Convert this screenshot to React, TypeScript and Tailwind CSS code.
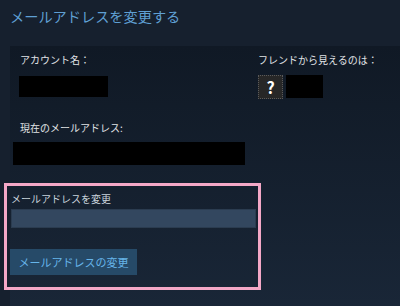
export default function App() {
  const font = { fontFamily: '"Noto Sans CJK JP", "Noto Sans", sans-serif' };
  return (
    <div
      className="w-[400px] h-[306px] overflow-hidden bg-[#16202e] flex flex-col"
      style={font}
    >
      <div className="pt-[6px] pl-[10px] text-[14.2px] leading-[20px] text-[#5f9fd3]">
        メールアドレスを変更する
      </div>
      <div className="mt-[20px] ml-[10px] flex-1 bg-gradient-to-b from-[#101925] to-[#192637] flex flex-col pt-[7px]">
        <div className="flex">
          <div className="w-[248px] pl-[10px] flex flex-col">
            <div className="text-[10px] leading-[14px] text-[#e1e4e6]">アカウント名：</div>
            <div className="mt-[9px] -ml-[1px] w-[89px] h-[21px] bg-black" />
          </div>
          <div className="flex flex-col">
            <div className="text-[10px] leading-[14px] text-[#e1e4e6]">フレンドから見えるのは：</div>
            <div className="mt-[8px] flex gap-[3px]">
              <div className="w-[25px] h-[24px] bg-[#272727] border border-dotted border-[#5a5a5a] flex items-center justify-center text-white text-[16px] font-semibold leading-none">
                ?
              </div>
              <div className="w-[37px] h-[23px] bg-black" />
            </div>
          </div>
        </div>
        <div className="mt-[22px] pl-[10px] text-[10px] leading-[14px] text-[#e1e4e6]">
          現在のメールアドレス:
        </div>
        <div className="mt-[7px] ml-[3px] w-[232px] h-[23px] bg-black" />
        <div className="mt-[18px] -ml-[6px] w-[257px] border-[3px] border-[#f4a8c7] pt-[6px] pl-[3px] pb-[12px] flex flex-col items-start">
          <div className="ml-[1px] text-[10px] leading-[14px] text-[#c9d3dc]">メールアドレスを変更</div>
          <div className="mt-[3px] ml-[1px] w-[245px] h-[19px] bg-[#33475f] border border-[#2b3c50]" />
          <div className="mt-[21px] w-[127px] h-[26px] bg-[#264a68] flex items-center justify-center text-[11px] text-[#66b5ea]">
            メールアドレスの変更
          </div>
        </div>
      </div>
    </div>
  );
}
